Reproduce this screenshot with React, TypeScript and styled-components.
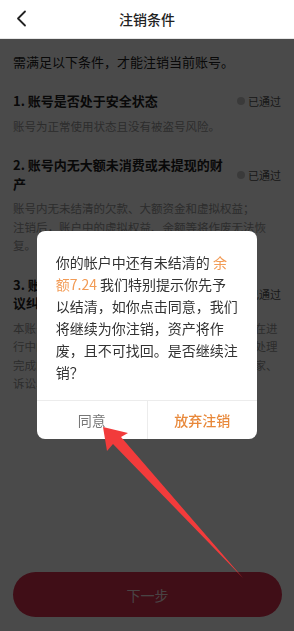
import React from 'react';
import styled, { createGlobalStyle } from 'styled-components';

const GlobalStyle = createGlobalStyle`
  html, body {
    margin: 0;
    padding: 0;
    background: #ffffff;
    font-family: 'Noto Sans CJK SC', 'Noto Sans', sans-serif;
  }
`;

interface ICondition {
  title: string;
  desc: string;
}

const conditions: ICondition[] = [
  {
    title: '1. 账号是否处于安全状态',
    desc: '账号为正常使用状态且没有被盗号风险。',
  },
  {
    title: '2. 账号内无大额未消费或未提现的财产',
    desc: '账号内无未结清的欠款、大额资金和虚拟权益；\n注销后，账户中的虚拟权益、余额等将作废无法恢复。',
  },
  {
    title: '3. 账号不存在未处理的投诉举报或争议纠纷',
    desc: '本账号不存在任何未完成的交易或服务，以及正在进行中的投诉、举报、争议纠纷，或已投诉但尚待处理完成的事项，包括但不限于与用户、平台方、商家、诉讼、仲裁等纠纷。',
  },
];

const Page = styled.div`
  display: flex;
  flex-direction: column;
  height: 100vh;
  background: #ffffff;
`;

const Header = styled.div`
  position: relative;
  display: flex;
  align-items: center;
  justify-content: center;
  height: 38px;
  border-bottom: 1px solid #e6e6e6;
  flex-shrink: 0;
`;

const BackButton = styled.div`
  position: absolute;
  left: 12px;
  top: 9px;
  width: 20px;
  height: 20px;
`;

const HeaderTitle = styled.div`
  font-size: 14px;
  font-weight: 500;
  color: #222222;
`;

const Content = styled.div`
  flex: 1;
  padding: 14px 13px 0;
`;

const Intro = styled.div`
  font-size: 13px;
  line-height: 18px;
  color: #222222;
`;

const Item = styled.div`
  padding-top: 21px;
`;

const TitleRow = styled.div`
  display: flex;
  align-items: center;
  gap: 12px;
`;

const ItemTitle = styled.div`
  flex: 1;
  font-size: 13px;
  line-height: 18.5px;
  font-weight: 700;
  color: #222222;
`;

const Status = styled.div`
  display: flex;
  align-items: center;
  gap: 3px;
  font-size: 11px;
  color: #555555;
  flex-shrink: 0;
`;

const Dot = styled.span`
  width: 8px;
  height: 8px;
  border-radius: 50%;
  background: #c8c8c8;
`;

const ItemDesc = styled.div`
  margin-top: 6px;
  font-size: 11.5px;
  line-height: 18.5px;
  color: #999999;
  white-space: pre-line;
`;

const Footer = styled.div`
  padding: 0 12px 14px 13px;
`;

const NextButton = styled.div`
  display: flex;
  align-items: center;
  justify-content: center;
  height: 45px;
  border-radius: 23px;
  background: #dc3050;
  color: rgba(255, 255, 255, 0.9);
  font-size: 14px;
`;

const Mask = styled.div`
  position: fixed;
  left: 0;
  right: 0;
  top: 39px;
  bottom: 0;
  background: rgba(0, 0, 0, 0.71);
  display: flex;
  align-items: center;
  justify-content: center;
`;

const Dialog = styled.div`
  width: 220px;
  background: #ffffff;
  border-radius: 8px;
  overflow: hidden;
`;

const DialogText = styled.div`
  padding: 20px 18.75px 17px;
  font-size: 14px;
  line-height: 22px;
  color: #333333;
`;

const Highlight = styled.span`
  color: #f29b55;
`;

const DialogActions = styled.div`
  display: flex;
  height: 38px;
  border-top: 1px solid #ececec;
`;

const DialogButton = styled.div<{ $primary?: boolean }>`
  flex: 1;
  display: flex;
  align-items: center;
  justify-content: center;
  font-size: 14px;
  color: ${p => (p.$primary ? '#e8883a' : '#777777')};
  font-weight: ${p => (p.$primary ? 500 : 400)};
  & + & {
    border-left: 1px solid #ececec;
  }
`;

const ArrowLayer = styled.svg`
  position: fixed;
  left: 0;
  top: 0;
  width: 294px;
  height: 631px;
  pointer-events: none;
`;

const App: React.FC = () => {
  return (
    <>
      <GlobalStyle />
      <Page>
        <Header>
          <BackButton>
            <svg width="20" height="20" viewBox="0 0 20 20">
              <polyline
                points="13,2.5 6,9.5 13,16.5"
                fill="none"
                stroke="#222"
                strokeWidth="1.8"
                strokeLinecap="round"
                strokeLinejoin="round"
              />
            </svg>
          </BackButton>
          <HeaderTitle>注销条件</HeaderTitle>
        </Header>
        <Content>
          <Intro>需满足以下条件，才能注销当前账号。</Intro>
          {conditions.map(item => (
            <Item key={item.title}>
              <TitleRow>
                <ItemTitle>{item.title}</ItemTitle>
                <Status>
                  <Dot />
                  已通过
                </Status>
              </TitleRow>
              <ItemDesc>{item.desc}</ItemDesc>
            </Item>
          ))}
        </Content>
        <Footer>
          <NextButton>下一步</NextButton>
        </Footer>
      </Page>
      <Mask>
        <Dialog>
          <DialogText>
            你的帐户中还有未结清的 <Highlight>余额7.24</Highlight>{' '}
            我们特别提示你先予以结清，如你点击同意，我们将继续为你注销，资产将作废，且不可找回。是否继续注销？
          </DialogText>
          <DialogActions>
            <DialogButton>同意</DialogButton>
            <DialogButton $primary>放弃注销</DialogButton>
          </DialogActions>
        </Dialog>
      </Mask>
      <ArrowLayer viewBox="0 0 294 631">
        <polygon
          points="103,427 128,433 121,437 243,578 113,444 107,451"
          fill="#f23b3b"
        />
      </ArrowLayer>
    </>
  );
};

export default App;
